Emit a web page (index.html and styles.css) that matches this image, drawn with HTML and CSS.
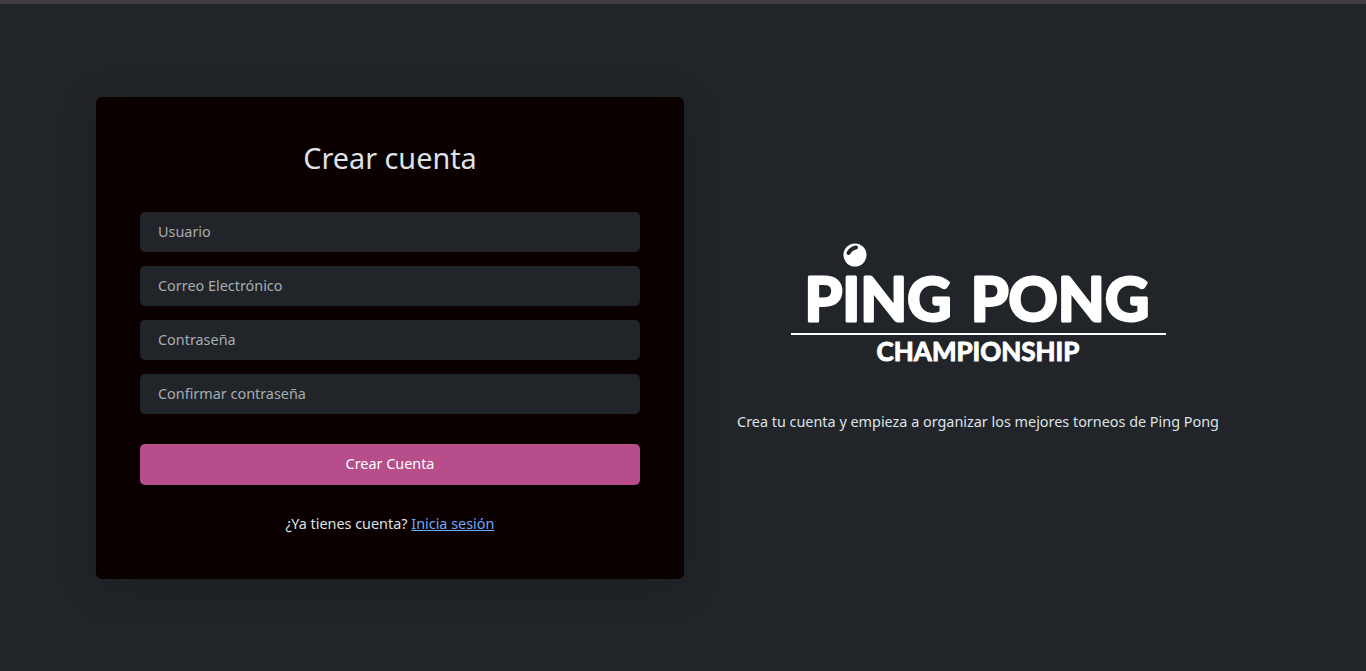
FILE: index.html
```html
<!DOCTYPE html>
<html lang="es">
<head>
  <meta charset="utf-8">
  <meta name="viewport" content="width=device-width, initial-scale=1">
  <title>Crear cuenta</title>
  <link rel="stylesheet" href="styles.css">
</head>
<body>
  <main class="page">
    <section class="card">
      <h1 class="card-title">Crear cuenta</h1>
      <form class="form">
        <input class="field" type="text" name="username" placeholder="Usuario" aria-label="Usuario">
        <input class="field" type="email" name="email" placeholder="Correo Electrónico" aria-label="Correo Electrónico">
        <input class="field" type="password" name="password" placeholder="Contraseña" aria-label="Contraseña">
        <input class="field" type="password" name="confirm" placeholder="Confirmar contraseña" aria-label="Confirmar contraseña">
        <button class="submit" type="submit">Crear Cuenta</button>
      </form>
      <p class="login">¿Ya tienes cuenta? <a class="link" href="#">Inicia sesión</a></p>
    </section>
    <section class="intro">
      <svg class="logo" viewBox="0 0 375 128" role="img" aria-label="Ping Pong Championship">
        <circle cx="64" cy="12" r="11.5" fill="#fff"/>
        <path d="M57.5 10Q60 5.5 65 4.5" fill="none" stroke="#212529" stroke-width="4" stroke-linecap="round"/>
        <text class="logo-name" x="87" y="78">PING</text>
        <text class="logo-name" x="269" y="78">PONG</text>
        <path d="M0 91H375" stroke="#fff" stroke-width="2"/>
        <text class="logo-sub" x="187" y="118">CHAMPIONSHIP</text>
      </svg>
      <p class="tagline">Crea tu cuenta y empieza a organizar los mejores torneos de Ping Pong</p>
    </section>
  </main>
</body>
</html>
```

FILE: styles.css
```css
* {
  box-sizing: border-box;
}

body {
  margin: 0;
  min-height: 100vh;
  display: flex;
  border-top: 4px solid #3f3b40;
  background: #212529;
  color: #dee2e6;
  font: 90%/22px "Noto Sans", sans-serif;
}

.page {
  flex: 1;
  display: grid;
  grid-template-columns: 1fr 1fr;
  align-items: center;
  padding: 24px 94px 24px 96px;
}

.card {
  padding: 44px;
  border-radius: 6px;
  background: #0a0000;
  box-shadow: 0 8px 40px rgba(0, 0, 0, 0.2);
}

.card-title {
  margin: 0 0 38px;
  font-size: 2em;
  font-weight: 400;
  line-height: 33px;
  text-align: center;
}

.form {
  display: flex;
  flex-direction: column;
  gap: 14px;
}

.field,
.submit {
  width: 100%;
  height: 40px;
  border: 0;
  border-radius: 5px;
  font: inherit;
}

.field {
  padding: 0 18px;
  background: #212529;
  color: #dee2e6;
}

.field::placeholder {
  color: #a7acb1;
  opacity: 1;
}

.submit {
  height: 41px;
  margin-top: 16px;
  background: #b84d8b;
  color: #fff;
  cursor: pointer;
}

.login {
  margin: 28px 0 0;
  text-align: center;
}

.link {
  color: #6ea8fe;
}

.intro {
  display: flex;
  flex-direction: column;
  align-items: center;
  gap: 40px;
  text-align: center;
}

.logo {
  width: 375px;
  max-width: 100%;
}

.logo-name,
.logo-sub {
  fill: #fff;
  stroke: #fff;
  stroke-linejoin: round;
  text-anchor: middle;
}

.logo-name {
  font: 700 61px Lato, sans-serif;
  stroke-width: 3px;
}

.logo-sub {
  font: 700 26px Lato, sans-serif;
  stroke-width: 1px;
}

.tagline {
  margin: 0;
}
```
